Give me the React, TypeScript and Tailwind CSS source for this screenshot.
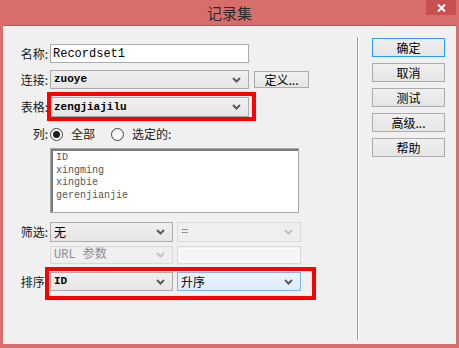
import React from "react";

const cjk = "font-['Microsoft_YaHei','Noto_Sans_CJK_SC',sans-serif]";
const mono = "font-['Liberation_Mono','Noto_Sans_CJK_SC',monospace]";

function Chevron({ color }: { color: string }) {
  return (
    <svg width="9" height="6" viewBox="0 0 9 6" className="shrink-0">
      <path d="M1 1 L4.5 4.5 L8 1" fill="none" stroke={color} strokeWidth="2" />
    </svg>
  );
}

function Select({
  text,
  className,
  variant = "normal",
  textClass = "",
}: {
  text: string;
  className: string;
  variant?: "normal" | "disabled" | "hot";
  textClass?: string;
}) {
  const look =
    variant === "disabled"
      ? "border-[#d9d9d9] bg-[#efefef] text-[#8d8d8d]"
      : variant === "hot"
        ? "border-[#7eb4ea] bg-gradient-to-b from-[#ecf4fc] to-[#dcecfc] text-black"
        : "border-[#acacac] bg-gradient-to-b from-[#f0f0f0] to-[#e5e5e5] text-black";
  return (
    <div className={`flex items-center justify-between border pl-[3px] pr-[7px] ${look} ${className}`}>
      <span className={`leading-none whitespace-nowrap ${textClass}`}>{text}</span>
      <Chevron color={variant === "disabled" ? "#c4c4c4" : "#5a5a5a"} />
    </div>
  );
}

function Label({ text }: { text: string }) {
  return (
    <div className={`w-[47px] shrink-0 text-right pr-[2px] text-[12px] leading-none text-[#1a1a1a] ${cjk}`}>{text}</div>
  );
}

function Radio({ checked }: { checked?: boolean }) {
  return (
    <div className="w-[13px] h-[13px] rounded-full border border-[#444] bg-gradient-to-b from-[#f4f4f4] to-white flex items-center justify-center">
      {checked && <div className="w-[7px] h-[7px] rounded-full bg-[#1d1d1d]" />}
    </div>
  );
}

function SideButton({ text, primary }: { text: string; primary?: boolean }) {
  return (
    <div
      className={`h-[19px] w-[73px] flex items-center justify-center border bg-gradient-to-b from-[#f0f0f0] to-[#e5e5e5] text-[12px] leading-none text-black ${cjk} ${
        primary ? "border-[#3399ff]" : "border-[#acacac]"
      }`}
    >
      {text}
    </div>
  );
}

export default function App() {
  const columns = ["ID", "xingming", "xingbie", "gerenjianjie"];
  const selMono = `${mono} text-[11px] font-bold`;
  return (
    <div className="w-[459px] h-[348px] bg-[#d76e6c] flex flex-col overflow-hidden">
      <div className="relative h-[25px] flex items-center justify-center">
        <span className={`text-[15px] leading-none text-[#2a2a2a] ${cjk}`}>记录集</span>
        <div className="absolute top-0 right-[3px] w-[30px] h-[15px] bg-[#c75050] flex items-center justify-center">
          <svg width="9" height="8" viewBox="0 0 9 8">
            <path d="M1 0.5 L8 7.5 M8 0.5 L1 7.5" stroke="white" strokeWidth="2" />
          </svg>
        </div>
      </div>

      <div className="mx-[3px] mb-[4px] flex-1 flex bg-[#f0f0f0] border-t border-[#b25a58]">
        {/* left panel */}
        <div className="w-[354px] pt-[18px] flex flex-col">
          <div className="flex items-center h-[19px]">
            <Label text="名称:" />
            <div className={`w-[199px] h-[19px] border border-[#acacac] bg-white flex items-center pl-[2px] text-[12px] leading-none ${mono}`}>
              Recordset1
            </div>
          </div>

          <div className="flex items-center h-[19px] mt-[7px]">
            <Label text="连接:" />
            <Select text="zuoye" className="w-[199px] h-[19px]" textClass={selMono} />
            <div className={`ml-[5px] w-[55px] h-[17px] border border-[#acacac] bg-gradient-to-b from-[#f0f0f0] to-[#e5e5e5] flex items-center justify-center text-[12px] leading-none ${cjk}`}>
              定义...
            </div>
          </div>

          <div className="flex items-center h-[20px] mt-[8px]">
            <Label text="表格:" />
            <div className="relative">
              <Select text="zengjiajilu" className="w-[199px] h-[20px]" textClass={selMono} />
              <div className="absolute -left-[3px] -top-[5px] w-[209px] h-[29px] border-4 border-[#ff0000]" />
            </div>
          </div>

          <div className={`flex items-center h-[14px] mt-[10px] text-[12px] leading-none text-[#1a1a1a] ${cjk}`}>
            <Label text="列:" />
            <Radio checked />
            <span className="ml-[8px]">全部</span>
            <div className="ml-[16px]">
              <Radio />
            </div>
            <span className="ml-[8px]">选定的:</span>
          </div>

          <div className="ml-[47px] mt-[7px] w-[249px] h-[65px] border border-[#a8a8a8] bg-white">
            <div className={`h-full border-l-2 border-t-2 border-[#7a7a7a] pl-[3px] pt-[1px] text-[10px] leading-[12.5px] text-[#555] ${mono}`}>
              {columns.map((c) => (
                <div key={c}>{c}</div>
              ))}
            </div>
          </div>

          <div className="flex items-center h-[20px] mt-[9px]">
            <Label text="筛选:" />
            <Select text="无" className="w-[123px] h-[20px]" textClass={`${cjk} text-[12px]`} />
            <Select text="=" variant="disabled" className="ml-[4px] w-[124px] h-[20px]" textClass={`${mono} text-[12px]`} />
          </div>

          <div className="flex items-center h-[18px] mt-[4px] pl-[47px]">
            <Select text="URL 参数" variant="disabled" className="w-[123px] h-[18px]" textClass={`${mono} text-[12px]`} />
            <div className="ml-[4px] w-[124px] h-[18px] border border-[#d9d9d9] bg-[#f4f4f4] p-px">
              <div className="h-full border border-white" />
            </div>
          </div>

          <div className="flex items-center h-[19px] mt-[8px]">
            <Label text="排序:" />
            <div className="relative flex">
              <Select text="ID" className="w-[123px] h-[19px]" textClass={selMono} />
              <Select text="升序" variant="hot" className="ml-[4px] w-[124px] h-[19px]" textClass={`${cjk} text-[12px]`} />
              <div className="absolute -left-[5px] -top-[5px] w-[271px] h-[33px] border-4 border-[#ff0000]" />
            </div>
          </div>
        </div>

        {/* separator */}
        <div className="mt-[11px] mb-[4px] w-[2px] border-l border-[#a0a0a0] border-r border-r-white" />

        {/* right panel */}
        <div className="pl-[13px] pt-[12px] flex flex-col gap-[6px]">
          <SideButton text="确定" primary />
          <SideButton text="取消" />
          <SideButton text="测试" />
          <SideButton text="高级..." />
          <SideButton text="帮助" />
        </div>
      </div>
    </div>
  );
}
